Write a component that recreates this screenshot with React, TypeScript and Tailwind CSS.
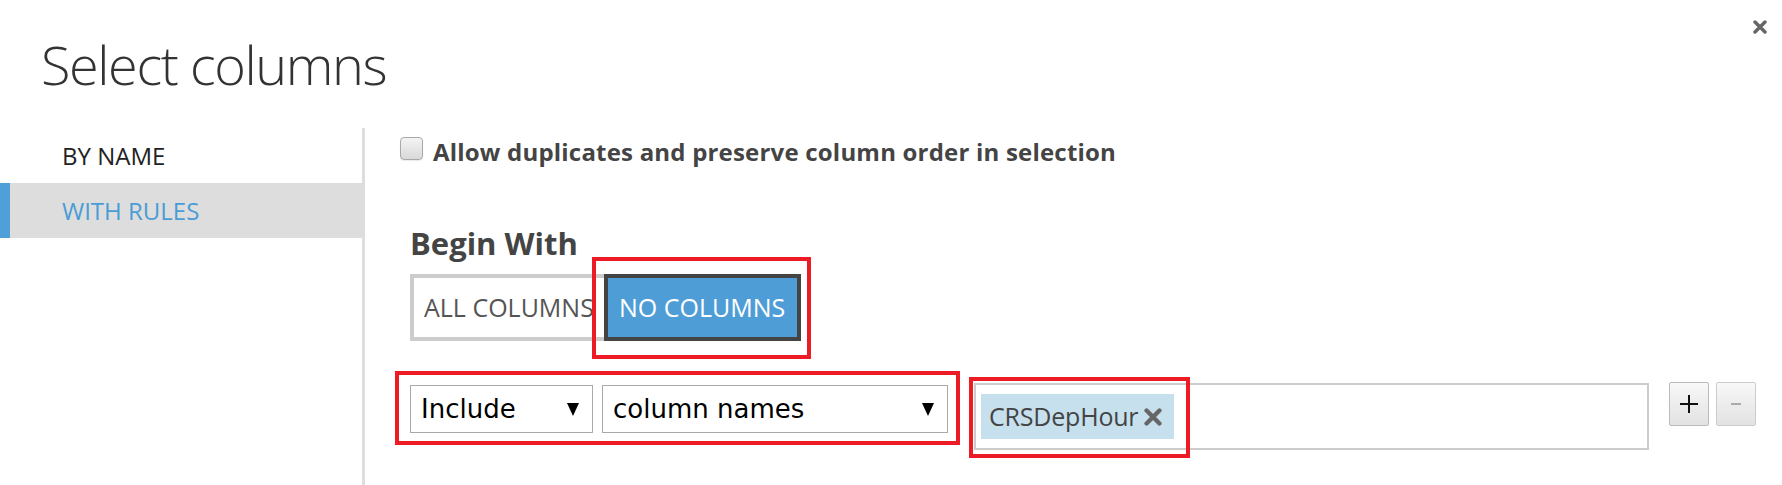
import React from 'react'

function XIcon({ className }: { className?: string }) {
  return (
    <svg viewBox="0 0 14 14" className={className}>
      <path d="M2 2 L12 12 M12 2 L2 12" stroke="currentColor" strokeWidth="3.4" strokeLinecap="round" fill="none" />
    </svg>
  )
}

function Caret() {
  return (
    <svg viewBox="0 0 12 13" className="w-[12px] h-[13px]">
      <polygon points="0,0 12,0 6,13" fill="#000" />
    </svg>
  )
}

function NavItem({ label, active }: { label: string; active?: boolean }) {
  if (active) {
    return (
      <div className="h-[55px] flex items-center bg-[#dddddd] border-l-[10px] border-[#4f9fd8] pl-[52px] text-[24px] text-[#4a9cd6]">
        {label}
      </div>
    )
  }
  return <div className="h-[55px] flex items-center pl-[62px] text-[24px] text-[#222]">{label}</div>
}

function Select({ value, width }: { value: string; width: string }) {
  return (
    <div
      className={`${width} h-[48px] border border-[#aaa] bg-white flex items-center justify-between pl-[10px] pr-[13px] font-['DejaVu_Sans',sans-serif] text-[26px] text-black`}
    >
      <span>{value}</span>
      <Caret />
    </div>
  )
}

export default function App() {
  return (
    <div className="w-[1782px] h-[485px] bg-white overflow-hidden font-['Open_Sans',sans-serif] text-[#333]">
      <div className="h-[128px] flex justify-between items-start">
        <h1 className="pt-[37px] pl-[41px] text-[54px] leading-none font-light tracking-[-1.4px] text-[#333]">
          Select columns
        </h1>
        <button className="mt-[20px] mr-[15px] text-[#666]">
          <XIcon className="w-[14px] h-[14px]" />
        </button>
      </div>

      <div className="flex h-[357px]">
        <nav className="w-[365px] shrink-0 border-r-[3px] border-[#dddddd]">
          <NavItem label="BY NAME" />
          <NavItem label="WITH RULES" active />
        </nav>

        <div className="flex-1 pl-[35px]">
          <label className="mt-[9px] flex items-start gap-[10px]">
            <span className="w-[23px] h-[23px] rounded-[4px] border border-[#a8a8a8] bg-gradient-to-b from-[#f4f4f4] to-[#d9d9d9] shadow-[0_1px_1px_rgba(0,0,0,0.08)]" />
            <span className="mt-[1px] text-[24px] leading-[28px] font-bold tracking-[0.2px] text-[#444]">
              Allow duplicates and preserve column order in selection
            </span>
          </label>

          <div className="pl-[10px]">
            <h2 className="mt-[59px] text-[31px] leading-[36px] font-bold text-[#444]">Begin With</h2>

            <div className="mt-[13px] flex">
              <div className="w-[194px] h-[67px] border-4 border-r-0 border-[#cccccc] bg-white flex items-center pl-[10px] text-[25px] text-[#555] whitespace-nowrap overflow-hidden">
                ALL COLUMNS
              </div>
              <div className="relative w-[197px] h-[67px] border-4 border-[#444] bg-[#4f9dd6] flex items-center pl-[11px] text-[25px] text-white whitespace-nowrap">
                NO COLUMNS
                <div className="absolute -left-[16px] -top-[21px] -right-[14px] -bottom-[22px] border-4 border-[#ed1c24] z-10" />
              </div>
            </div>
          </div>

          <div className="mt-[42px] pl-[10px] flex items-start">
            <div className="relative mt-[2px] flex gap-[9px]">
              <Select value="Include" width="w-[183px]" />
              <Select value="column names" width="w-[346px]" />
              <div className="absolute -left-[15px] -top-[14px] -right-[12px] -bottom-[12px] border-4 border-[#ed1c24]" />
            </div>

            <div className="ml-[26px] w-[675px] h-[67px] border-2 border-[#cccccc] pl-[5px] pt-[9px]">
              <div className="relative w-[193px] h-[45px] bg-[#c7e0ee] flex items-center pl-[8px] gap-[6px] text-[25px] tracking-[-0.2px] text-[#444] whitespace-nowrap">
                <span>CRSDepHour</span>
                <XIcon className="w-[18px] h-[18px] text-[#666]" />
                <div className="absolute -left-[12px] -top-[17px] -right-[16px] -bottom-[19px] border-4 border-[#ed1c24]" />
              </div>
            </div>

            <div className="ml-[20px] -mt-[1px] flex gap-[7px]">
              <button className="w-[40px] h-[44px] rounded-[2px] border border-[#bbb] bg-gradient-to-b from-[#f8f8f8] to-[#e2e2e2] flex items-center justify-center">
                <svg viewBox="0 0 20 20" className="w-[20px] h-[20px]">
                  <path d="M10 1 V19 M1 10 H19" stroke="#111" strokeWidth="2" fill="none" />
                </svg>
              </button>
              <button className="w-[40px] h-[44px] rounded-[2px] border border-[#ccc] bg-gradient-to-b from-[#f8f8f8] to-[#e2e2e2] flex items-center justify-center">
                <svg viewBox="0 0 12 4" className="w-[12px] h-[4px]">
                  <path d="M1 2 H11" stroke="#aaa" strokeWidth="2" fill="none" />
                </svg>
              </button>
            </div>
          </div>
        </div>
      </div>
    </div>
  )
}
